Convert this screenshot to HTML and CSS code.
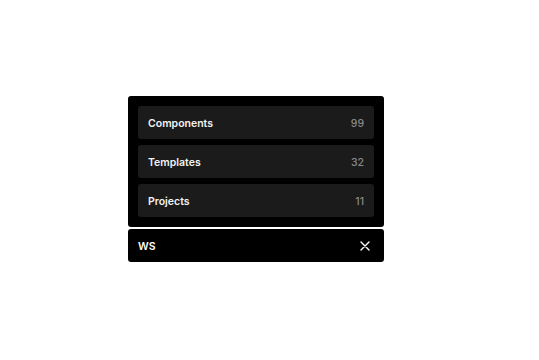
FILE: index.html
```html
<!DOCTYPE html>
<html>
<head>
<meta charset="utf-8">
<link rel="stylesheet" href="styles.css">
</head>
<body>
<div class="stage">
  <div class="widget">
    <div class="panel">
      <div class="item"><span class="label">Components</span><span class="count">99</span></div>
      <div class="item"><span class="label">Templates</span><span class="count">32</span></div>
      <div class="item"><span class="label">Projects</span><span class="count">11</span></div>
    </div>
    <div class="search">
      <span class="query">WS</span>
      <svg class="close" width="10" height="10" viewBox="0 0 10 10"><path d="M1 1 L9 9 M9 1 L1 9" stroke="#fff" stroke-width="1.4" stroke-linecap="round" fill="none"/></svg>
    </div>
  </div>
</div>
</body>
</html>
```
FILE: styles.css
```css
html, body {
  margin: 0;
  padding: 0;
  background: #fff;
}
body {
  font-family: Inter, "Noto Sans", sans-serif;
  -webkit-font-smoothing: antialiased;
}
.stage {
  padding-top: 96px;
  padding-left: 128px;
}
.widget {
  width: 256px;
  display: flex;
  flex-direction: column;
  gap: 2px;
}
.panel {
  background: #000;
  border-radius: 3px;
  padding: 10px;
  display: flex;
  flex-direction: column;
  gap: 6px;
}
.item {
  height: 33px;
  box-sizing: border-box;
  padding: 1px 10px 0;
  background: #1b1b1b;
  border-radius: 3px;
  display: flex;
  align-items: center;
  justify-content: space-between;
  font-size: 10.5px;
  font-weight: 600;
}
.label {
  color: #f2f2f2;
}
.count {
  color: #8a8a8a;
  font-weight: 500;
}
.search {
  height: 33px;
  box-sizing: border-box;
  background: #000;
  border-radius: 3px;
  display: flex;
  align-items: center;
  justify-content: space-between;
  padding: 1px 14px 0 10px;
}
.query {
  color: #fff;
  font-size: 10.5px;
  font-weight: 600;
}
.close {
  display: block;
}
```
